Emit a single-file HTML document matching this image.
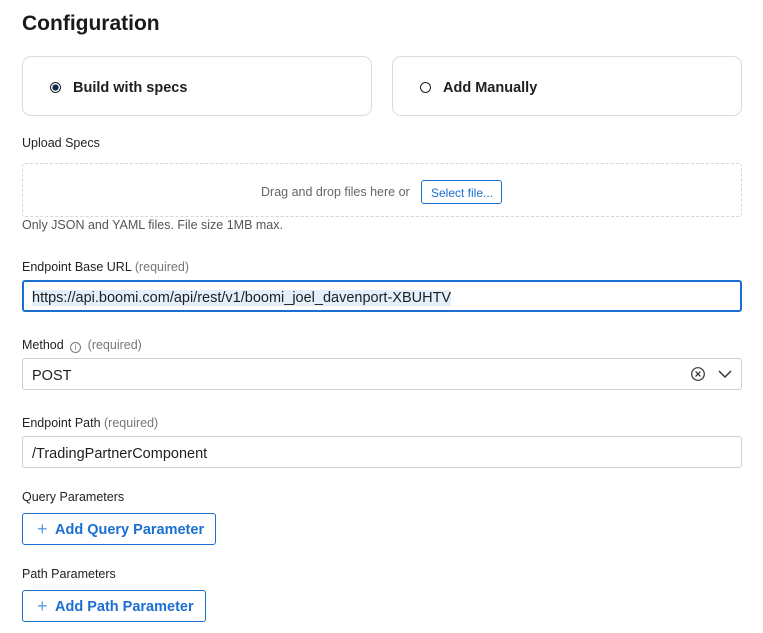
<!DOCTYPE html>
<html><head><meta charset="utf-8"><style>
*{box-sizing:border-box;margin:0;padding:0}
body{width:763px;height:633px;background:#fff;font-family:"Liberation Sans",sans-serif;color:#1f1f1f;position:relative;overflow:hidden}
.a{position:absolute}
.lbl{font-size:12.5px;color:#222}
.req{color:#777}
.card{border:1px solid #dcdcdc;border-radius:9px;height:60px;top:56px;width:350px}
.card span{position:absolute;left:50px;top:23px;font-size:14.5px;font-weight:bold}
.radio{position:absolute;left:27px;top:25px;width:11px;height:11px;border-radius:50%;border:1.5px solid #222}
.inp{left:22px;width:720px;height:32px;border:1px solid #cfcfcf;border-radius:3px;font-size:14.5px;padding:9px 9px 0}
.btn{left:22px;height:32px;border:1px solid #1a6fd1;border-radius:3px;color:#1a6fd1;font-size:14.5px;font-weight:bold;padding:8px 0 0 32px}
.btn i{position:absolute;left:14px;top:7px;font-style:normal;font-weight:normal;font-size:18px;line-height:16px;color:#5a9ae0}
</style></head><body>
<div class="a" style="left:22px;top:12px;font-size:21px;font-weight:bold;color:#1a1a1a">Configuration</div>
<div class="a card" style="left:22px"><div class="radio" style="background:radial-gradient(circle,#0d2a52 45%,#fff 52%)"></div><span>Build with specs</span></div>
<div class="a card" style="left:392px"><div class="radio"></div><span>Add Manually</span></div>
<div class="a lbl" style="left:22px;top:136px">Upload Specs</div>
<div class="a" style="left:22px;top:163px;width:720px;height:54px;border:1px dashed #d6d6d6;border-radius:3px"></div>
<div class="a" style="left:261px;top:185px;font-size:12.5px;color:#666">Drag and drop files here or</div>
<div class="a" style="left:421px;top:180px;width:81px;height:24px;border:1px solid #1a6fd1;border-radius:3px;color:#1a6fd1;font-size:12px;padding:5px 0 0 9px">Select file...</div>
<div class="a lbl" style="left:22px;top:218px;color:#555">Only JSON and YAML files. File size 1MB max.</div>
<div class="a lbl" style="left:22px;top:260px">Endpoint Base URL <span class="req">(required)</span></div>
<div class="a inp" style="top:280px;border:2px solid #1a6fd1;padding:8px 8px 0"><span style="background:#e3f0fc">https://api.boomi.com/api/rest/v1/boomi_joel_davenport-XBUHTV</span></div>
<div class="a lbl" style="left:22px;top:338px">Method <span style="display:inline-block;width:11px;height:11px;border:1px solid #777;border-radius:50%;font-size:8px;text-align:center;line-height:9px;color:#777;margin:0 3px;vertical-align:-1px">i</span> <span class="req">(required)</span></div>
<div class="a inp" style="top:358px">POST</div>
<svg class="a" style="left:690px;top:366px" width="16" height="16" viewBox="0 0 16 16"><circle cx="8" cy="8" r="6.3" fill="none" stroke="#333" stroke-width="1.2"/><path d="M5.6 5.6L10.4 10.4M10.4 5.6L5.6 10.4" stroke="#333" stroke-width="1.3"/></svg>
<svg class="a" style="left:717px;top:368px" width="16" height="12" viewBox="0 0 16 12"><path d="M2 3L8 9L14 3" fill="none" stroke="#333" stroke-width="1.5"/></svg>
<div class="a lbl" style="left:22px;top:416px">Endpoint Path <span class="req">(required)</span></div>
<div class="a inp" style="top:436px">/TradingPartnerComponent</div>
<div class="a lbl" style="left:22px;top:490px">Query Parameters</div>
<div class="a btn" style="top:513px;width:194px"><i>+</i>Add Query Parameter</div>
<div class="a lbl" style="left:22px;top:567px">Path Parameters</div>
<div class="a btn" style="top:590px;width:184px"><i>+</i>Add Path Parameter</div>
</body></html>
